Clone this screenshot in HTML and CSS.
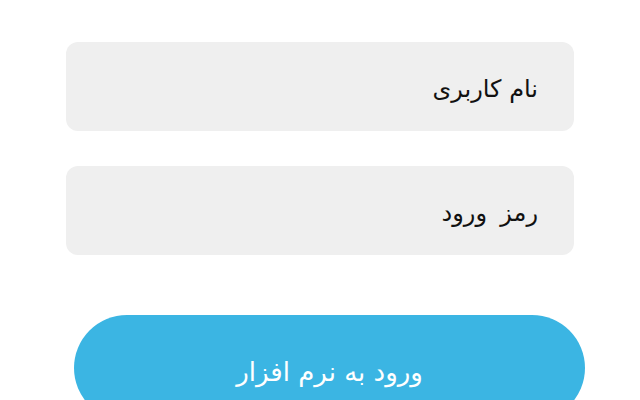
FILE: index.html
```html
<!DOCTYPE html>
<html lang="fa">
<head>
<meta charset="utf-8">
<link rel="stylesheet" href="styles.css">
</head>
<body>
<div class="form">
  <div class="field" dir="rtl"><span class="label">نام کاربری</span></div>
  <div class="field field-second" dir="rtl"><span class="label">رمز  ورود</span></div>
  <div class="submit" dir="rtl">ورود به نرم افزار</div>
</div>
</body>
</html>
```
FILE: styles.css
```css
html, body {
  margin: 0;
  padding: 0;
  background: #ffffff;
  overflow: hidden;
}
body {
  width: 640px;
  height: 400px;
  font-family: "DejaVu Sans", "Noto Sans", sans-serif;
}
.form {
  display: flex;
  flex-direction: column;
  align-items: flex-start;
  padding-top: 42px;
  padding-left: 66px;
}
.field {
  width: 508px;
  height: 89px;
  box-sizing: border-box;
  background: #efefef;
  border-radius: 12px;
  display: flex;
  align-items: center;
  padding: 5px 36px 0 0;
  font-size: 24px;
  color: #111111;
  white-space: pre;
}
.field-second {
  margin-top: 35px;
  word-spacing: -1px;
}
.submit {
  margin-top: 60px;
  margin-left: 8px;
  width: 511px;
  height: 106px;
  box-sizing: border-box;
  flex-shrink: 0;
  background: #3bb5e3;
  border-radius: 53px;
  color: #ffffff;
  font-size: 26px;
  display: flex;
  align-items: center;
  justify-content: center;
  padding-top: 8px;
}
```
